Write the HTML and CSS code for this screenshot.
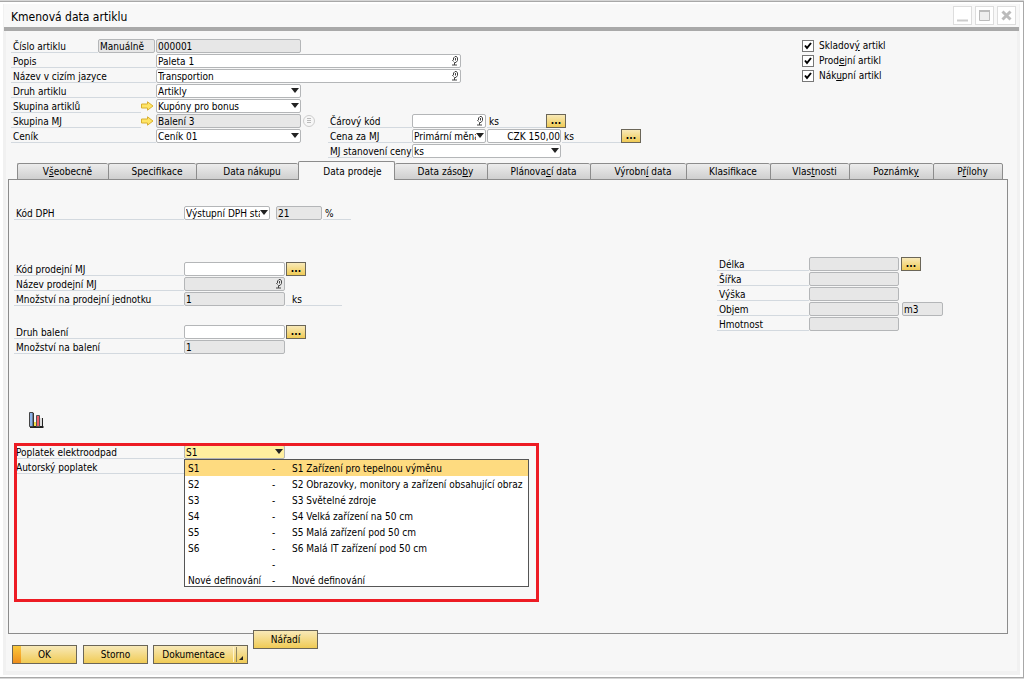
FILE: index.html
```html
<!doctype html>
<html lang="cs">
<head>
<meta charset="utf-8" />
<meta name="viewport" content="width=device-width" />

<title>Kmenová data artiklu</title>

<link rel="stylesheet" href="styles.css">

</head>
<body>

<svg class="defs" aria-hidden="true">
  <symbol id="i-lang" viewBox="0 0 8 10">
    <path d="M2.500 4V2L4 .5h1.500L6.500 2v2.500L5 6.500H3.500M4.500 2v2.500M2.500 4l-1 .5 1 1M3.500 6.500V9M1 9h5" fill="none" stroke="#444" stroke-width="1" />
  </symbol>
  <symbol id="i-link" viewBox="0 0 13 10">
    <path d="M.5 3h6V.8L12 5 6.500 9.200V7h-6z" fill="#ffe566" stroke="#d9b030" />
  </symbol>
</svg>

<div class="window">
<div class="frame">

  <header class="titlebar">
    <h1>Kmenová data artiklu</h1>
    <div class="win-buttons">
      <button aria-label="Minimalizovat"><svg width="17" height="17"><path d="M3 13.500h11" stroke="#ccc" stroke-width="2" /></svg></button>
      <button aria-label="Maximalizovat"><svg width="17" height="17"><path d="M3.500 4h10v9.500h-10z" fill="#eee" stroke="#bbb" /><path d="M3 4h11" stroke="#bbb" stroke-width="2" /></svg></button>
      <button aria-label="Zavřít"><svg width="17" height="17"><path d="M4.500 4.500l8 8M12.500 4.500l-8 8" stroke="#bbb" stroke-width="3" /></svg></button>
    </div>
  </header>

  <main class="content">

    <div class="head">
      <div class="head-fields">
        <div class="row">
          <label class="label label--short" for="code">Číslo artiklu</label>
          <input class="field w-series" value="Manuálně" aria-label="Série" readonly>
          <input class="field w-main" id="code" value="000001" readonly>
        </div>
        <div class="row">
          <label class="label" for="name">Popis</label>
          <span class="lang w-long"><input class="field" id="name" value="Paleta 1"><svg><use href="#i-lang" /></svg></span>
        </div>
        <div class="row">
          <label class="label" for="fname">Název v cizím jazyce</label>
          <span class="lang w-long"><input class="field" id="fname" value="Transportion"><svg><use href="#i-lang" /></svg></span>
        </div>
        <div class="row">
          <label class="label" for="type">Druh artiklu</label>
          <select class="field w-main" id="type"><option>Artikly</option></select>
        </div>
        <div class="row">
          <label class="label label--link" for="group">Skupina artiklů</label>
          <a class="link" href="#group" aria-label="Otevřít skupinu"><svg><use href="#i-link" /></svg></a>
          <select class="field w-main" id="group"><option>Kupóny pro bonus</option></select>
        </div>
        <div class="row">
          <div class="half">
            <label class="label label--link" for="uomgroup">Skupina MJ</label>
            <a class="link" href="#uomgroup" aria-label="Otevřít skupinu MJ"><svg><use href="#i-link" /></svg></a>
            <input class="field w-main" id="uomgroup" value="Balení 3" readonly>
            <button class="round" aria-label="Seznam"><svg width="12" height="12"><circle cx="6" cy="6" r="5.500" fill="#f7f7f7" stroke="#ccc" /><path d="M4 3.500h4M4 5.500h4M4 7.500h4" stroke="#bbb" /></svg></button>
          </div>
          <label class="label label--mid" for="barcode">Čárový kód</label>
          <span class="lang w-small"><input class="field" id="barcode"><svg><use href="#i-lang" /></svg></span>
          <span class="unit">ks</span>
          <button class="more" aria-label="Čárové kódy">...</button>
        </div>
        <div class="row">
          <div class="half">
            <label class="label" for="pricelist">Ceník</label>
            <select class="field w-main" id="pricelist"><option>Ceník 01</option></select>
          </div>
          <label class="label label--mid" for="price">Cena za MJ</label>
          <select class="field w-small" aria-label="Měna"><option>Primární měna</option></select>
          <input class="field w-small price" id="price" value="CZK 150,00">
          <span class="unit">ks</span>
          <button class="more" aria-label="Ceny">...</button>
        </div>
        <div class="row">
          <div class="half"></div>
          <label class="label label--mid" for="priceuom">MJ stanovení ceny</label>
          <select class="field w-wide" id="priceuom"><option>ks</option></select>
        </div>
      </div>

      <div class="checks">
        <label><input type="checkbox" checked> <span>Skladov<u>ý</u> artikl</span></label>
        <label><input type="checkbox" checked> <span>Prod<u>e</u>jní artikl</span></label>
        <label><input type="checkbox" checked> <span>Nák<u>u</u>pní artikl</span></label>
      </div>
    </div>

    <nav class="tabs">
      <button class="tab">V<u>š</u>eobecně</button>
      <button class="tab">Specifikace</button>
      <button class="tab">Data nákupu</button>
      <button class="tab tab--active">Data prodeje</button>
      <button class="tab">Data záso<u>b</u>y</button>
      <button class="tab">Plánova<u>c</u>í data</button>
      <button class="tab">Výrobn<u>í</u> data</button>
      <button class="tab">Klasifikace</button>
      <button class="tab">Vlas<u>t</u>nosti</button>
      <button class="tab">Poznámk<u>y</u></button>
      <button class="tab">P<u>ř</u>ílohy</button>
    </nav>

    <section class="panel">
      <div class="sales">
        <div class="rows rows--tax">
          <div class="row">
            <label class="label label--wide" for="tax">Kód DPH</label>
            <select class="field w-tax" id="tax"><option>Výstupní DPH standard</option></select>
            <input class="field w-rate" value="21" aria-label="Sazba" readonly>
            <span class="unit unit--rate">%</span>
          </div>
        </div>

        <div class="rows rows--uom">
          <div class="row">
            <label class="label label--wide" for="suom">Kód prodejní MJ</label>
            <input class="field w-sales" id="suom">
            <button class="more" aria-label="Vybrat MJ">...</button>
          </div>
          <div class="row">
            <label class="label label--wide" for="suomname">Název prodejní MJ</label>
            <span class="lang w-sales"><input class="field" id="suomname" readonly><svg><use href="#i-lang" /></svg></span>
          </div>
          <div class="row">
            <label class="label label--wide" for="sqty">Množství na prodejní jednotku</label>
            <input class="field w-sales" id="sqty" value="1" readonly>
            <span class="unit unit--qty">ks</span>
          </div>
        </div>

        <div class="rows rows--pack">
          <div class="row">
            <label class="label label--wide" for="pack">Druh balení</label>
            <input class="field w-sales" id="pack">
            <button class="more" aria-label="Vybrat balení">...</button>
          </div>
          <div class="row">
            <label class="label label--wide" for="pqty">Množství na balení</label>
            <input class="field w-sales" id="pqty" value="1" readonly>
          </div>
        </div>

        <button class="chart" aria-label="Analýza prodeje">
          <svg width="15" height="16">
            <path d="M1 15h13.500" stroke="#222" stroke-width="2" />
            <path d="M4.500 1v13M7.500 9v5M10.500 4v10M13.500 6v8" stroke="#222" />
            <path d="M.5.500h3.500v14H.5z" fill="#8db4ea" stroke="#444" />
            <path d="M5 10h2v4H5z" fill="#f4e04a" />
            <path d="M7.500 3.500h3v11h-3z" fill="#f0606a" stroke="#555" />
            <path d="M11 6h2v8h-2z" fill="#ddd" />
          </svg>
        </button>

        <div class="fees">
          <div class="row">
            <label class="label label--wide" for="weee">Poplatek elektroodpad</label>
            <div class="combo w-sales">
              <select class="field field--focus" id="weee"><option>S1</option></select>
              <ul class="list">
                <li class="is-selected"><span>S1</span><span>-</span><span>S1 Zařízení pro tepelnou výměnu</span></li>
                <li><span>S2</span><span>-</span><span>S2 Obrazovky, monitory a zařízení obsahující obraz</span></li>
                <li><span>S3</span><span>-</span><span>S3 Světelné zdroje</span></li>
                <li><span>S4</span><span>-</span><span>S4 Velká zařízení na 50 cm</span></li>
                <li><span>S5</span><span>-</span><span>S5 Malá zařízení pod 50 cm</span></li>
                <li><span>S6</span><span>-</span><span>S6 Malá IT zařízení pod 50 cm</span></li>
                <li><span></span><span>-</span><span></span></li>
                <li><span>Nové definování</span><span>-</span><span>Nové definování</span></li>
              </ul>
            </div>
          </div>
          <div class="row">
            <span class="label label--wide">Autorský poplatek</span>
          </div>
          <div class="marker"></div>
        </div>
      </div>

      <div class="dims">
        <div class="row">
          <label class="label label--dim" for="len">Délka</label>
          <input class="field w-dim" id="len" readonly>
          <button class="more more--dim" aria-label="Rozměry">...</button>
        </div>
        <div class="row">
          <label class="label label--dim" for="wid">Šířka</label>
          <input class="field w-dim" id="wid" readonly>
        </div>
        <div class="row">
          <label class="label label--dim" for="hei">Výška</label>
          <input class="field w-dim" id="hei" readonly>
        </div>
        <div class="row">
          <label class="label label--dim" for="vol">Objem</label>
          <input class="field w-dim" id="vol" readonly>
          <input class="field w-volunit" value="m3" aria-label="Jednotka objemu" readonly>
        </div>
        <div class="row">
          <label class="label label--dim" for="weight">Hmotnost</label>
          <input class="field w-dim" id="weight" readonly>
        </div>
      </div>
    </section>

    <footer class="actions">
      <button class="btn btn--default">OK</button>
      <button class="btn">Storno</button>
      <button class="btn btn--split">Dokumentace</button>
      <button class="btn btn--raised">Nářadí</button>
    </footer>

  </main>
</div>
</div>

</body>
</html>
```
FILE: styles.css
```css
* { box-sizing: border-box; }

body {
  margin: 0;
  background: #d6d6d6;
  color: #000;
  font: 10px/14px "DejaVu Sans Condensed", "Noto Sans", sans-serif;
}

button, input, select {
  margin: 0;
  padding: 0;
  border-radius: 0;
  font: inherit;
  color: inherit;
}

button { cursor: pointer; }

svg { display: block; }

.defs {
  position: absolute;
  width: 0;
  height: 0;
}

/* window chrome */

.window {
  display: flex;
  min-height: calc(100vh - 2px);
  margin: 1px 0;
  padding: 2px 3px;
  border: 1px solid #a8a8a8;
  border-left: 0;
  background: #fff;
}

.frame {
  display: flex;
  flex: 1;
  flex-direction: column;
  background: #f1f1f1;
}

.titlebar {
  display: flex;
  justify-content: space-between;
  height: 27px;
  margin: 0 1px;
  padding: 2px 3px 0 7px;
  border-bottom: 4px solid #a9a9a9;
  background: #f8f8f8;
}

.titlebar h1 {
  margin: 0;
  font-size: 12px;
  font-weight: normal;
  line-height: 22px;
}

.win-buttons {
  display: flex;
  gap: 3px;
}

.win-buttons button {
  width: 19px;
  height: 19px;
  border: 1px solid #ddd;
  background: #fff;
}

.content {
  display: flex;
  flex: 1;
  flex-direction: column;
  margin: 0 3px 4px;
  background: #f7f7f7;
}

/* form rows */

.row, .half { display: flex; }

.row {
  height: 14px;
  margin-bottom: 1px;
}

.half { flex: 0 0 317px; }

.label {
  flex: none;
  width: 145px;
  height: 14px;
  padding-left: 2px;
  border-bottom: 1px solid #d3d9df;
  line-height: 16px;
  white-space: nowrap;
  overflow: hidden;
}

.label--short { width: 87px; }
.label--link { width: 130px; }
.label--mid { width: 84px; }
.label--wide { width: 170px; }
.label--dim { width: 92px; }

.field {
  flex: none;
  height: 14px;
  padding: 0 1px;
  border: 1px solid #b4b6b8;
  border-radius: 2px;
  background: #fff;
  line-height: 12px;
  outline: 0;
}

.field:read-only:not(select) { background: #e7e7e7; }

select.field {
  appearance: none;
  padding-top: 1px;
  padding-right: 9px;
  background: #fff url("data:image/svg+xml,%3Csvg xmlns='http://www.w3.org/2000/svg' width='8' height='5'%3E%3Cpath d='M0 0h8L4 5z' fill='%23222'/%3E%3C/svg%3E") no-repeat right 1px top 3px;
}

select.field--focus { background-color: #ffef9f; }

.w-series { width: 57px; margin-right: 1px; }
.w-main { width: 145px; }
.w-long { width: 305px; }
.w-small { width: 74px; }
.w-wide { width: 149px; }
.w-tax { width: 86px; }
.w-rate { width: 46px; margin-left: 6px; }
.w-sales { width: 101px; }
.w-dim { width: 90px; }
.w-volunit { width: 41px; margin-left: 3px; }

.price {
  margin-left: 1px;
  padding-right: 0;
  text-align: right;
}

.lang {
  position: relative;
  display: flex;
}

.lang .field {
  width: 100%;
  padding-right: 12px;
}

.lang svg {
  position: absolute;
  top: 2px;
  right: 2px;
  width: 8px;
  height: 10px;
}

.link {
  flex: none;
  width: 15px;
  padding-top: 2px;
}

.link svg {
  width: 13px;
  height: 10px;
}

.round {
  margin-left: 2px;
  border: 0;
  background: none;
}

.unit {
  width: 59px;
  margin-left: 1px;
  padding-left: 2px;
  border-bottom: 1px solid #d3d9df;
  line-height: 16px;
}

.unit--rate { width: 28px; }
.unit--qty { width: 56px; padding-left: 6px; }

.more {
  flex: none;
  width: 20px;
  height: 14px;
  border: 1px solid #6b6658;
  background: linear-gradient(#f8e9b8, #f0cb55);
  font-weight: bold;
  line-height: 10px;
}

.w-sales + .more { margin-left: 1px; }
.more--dim { margin-left: 2px; }

/* header */

.head {
  display: flex;
  justify-content: space-between;
  padding: 8px 0 2px 5px;
}

.head-fields { flex: none; }

.checks {
  flex: none;
  width: 215px;
  padding-top: 1px;
}

.checks label {
  display: flex;
  gap: 5px;
  height: 15px;
  line-height: 12px;
}

.checks input {
  appearance: none;
  width: 12px;
  height: 12px;
  border: 1px solid #777;
  background: #fff url("data:image/svg+xml,%3Csvg xmlns='http://www.w3.org/2000/svg' width='10' height='10'%3E%3Cpath d='M2 4.500l2 2.500 4-5' fill='none' stroke='%23000' stroke-width='2'/%3E%3C/svg%3E") no-repeat;
}

/* tabs */

.tabs {
  position: relative;
  display: grid;
  grid-template-columns: 91fr 88fr 102fr 97fr 92fr 103fr 96fr 84fr 79fr 84fr 70fr;
  align-items: end;
  height: 19px;
  margin: 0 14px -1px 11px;
}

.tab {
  height: 17px;
  padding: 0 0 0 9px;
  border: 1px solid #8c8c8c;
  border-right-width: 0;
  border-radius: 2px 2px 0 0;
  background: linear-gradient(#ececec, #cfcfcf);
  line-height: 15px;
  white-space: nowrap;
}

.tab:last-child { border-right-width: 1px; }

.tab--active {
  height: 19px;
  padding-left: 12px;
  border-right-width: 1px;
  border-bottom: 0;
  background: #f7f7f7;
}

.tab--active + .tab { border-left-width: 0; }

/* sales data */

.panel {
  display: flex;
  flex: 1;
  justify-content: space-between;
  margin: 0 9px 0 2px;
  padding: 26px 0 0 5px;
  border: 1px solid #8c8c8c;
}

.rows--tax { margin-bottom: 42px; }
.rows--uom { margin-bottom: 19px; }
.rows--pack { margin-bottom: 58px; }

.chart {
  display: block;
  margin: 0 0 17px 15px;
  border: 0;
  background: none;
}

.dims {
  width: 290px;
  padding-top: 51px;
}

.fees { position: relative; }

.combo {
  position: relative;
  display: flex;
}

.combo .field { width: 100%; }

.list {
  position: absolute;
  top: 14px;
  left: 0;
  z-index: 1;
  width: 345px;
  height: 128px;
  margin: 0;
  padding: 0;
  border: 1px solid #555;
  background: #fff;
  list-style: none;
  line-height: 18px;
  white-space: nowrap;
  overflow: hidden;
}

.list li {
  display: grid;
  grid-template-columns: 84px 20px 1fr;
  height: 16px;
  padding-left: 3px;
}

.list .is-selected { background: #fedb80; }

/* red box drawn over the fee fields */
.marker {
  position: absolute;
  top: -2px;
  left: 0;
  z-index: 2;
  width: 525px;
  height: 159px;
  border: 3px solid #ed1c24;
  pointer-events: none;
}

/* bottom buttons */

.actions {
  display: flex;
  align-items: flex-start;
  gap: 5px;
  padding: 11px 6px 7px;
}

.btn {
  width: 65px;
  height: 19px;
  border: 1px solid #6b6658;
  background: linear-gradient(#f8e9b8, #f0cb55);
  line-height: 16px;
}

.btn--default {
  margin-right: 1px;
  background: linear-gradient(#fbc93d, #ef8e1c) no-repeat 0 0 / 8px 100%, linear-gradient(#f8e9b8, #f0cb55);
}

.btn--split {
  position: relative;
  width: 95px;
  padding-right: 14px;
}

.btn--split::before {
  position: absolute;
  top: 1px;
  right: 10px;
  width: 2px;
  height: 15px;
  border: solid #8f8560;
  border-width: 0 1px;
  border-left-color: #fff3cc;
  content: '';
}

.btn--split::after {
  position: absolute;
  right: 4px;
  bottom: 3px;
  border: 2px solid #222;
  border-top-color: transparent;
  border-left-color: transparent;
  content: '';
}

.btn--raised { margin-top: -15px; }
```
